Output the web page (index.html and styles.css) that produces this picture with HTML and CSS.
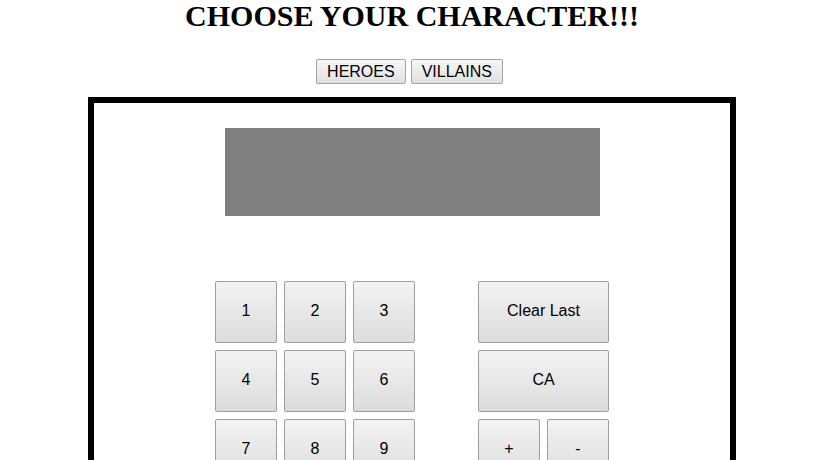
FILE: index.html
```html
<!DOCTYPE html>
<html>
<head>
<meta charset="utf-8">
<link rel="stylesheet" href="styles.css">
</head>
<body>
<div class="page">
  <h1 class="title">CHOOSE YOUR CHARACTER!!!</h1>
  <div class="tabs">
    <button class="tab">HEROES</button>
    <button class="tab">VILLAINS</button>
  </div>
  <div class="calc">
    <div class="display"></div>
    <div class="pad">
      <div class="nums">
        <button class="key">1</button>
        <button class="key">2</button>
        <button class="key">3</button>
        <button class="key">4</button>
        <button class="key">5</button>
        <button class="key">6</button>
        <button class="key">7</button>
        <button class="key">8</button>
        <button class="key">9</button>
      </div>
      <div class="ops">
        <button class="key wide">Clear Last</button>
        <button class="key wide">CA</button>
        <button class="key">+</button>
        <button class="key">-</button>
      </div>
    </div>
  </div>
</div>
</body>
</html>
```

FILE: styles.css
```css
html, body {
  margin: 0;
  padding: 0;
  background: #fff;
}
.page {
  width: 824px;
  height: 460px;
  overflow: hidden;
}
.title {
  margin: 0;
  padding: 0 0 2px;
  text-align: center;
  font-family: "Liberation Serif", serif;
  font-weight: bold;
  font-size: 30px;
  line-height: 31px;
  color: #000;
}
.tabs {
  display: flex;
  justify-content: center;
  gap: 5px;
  padding-right: 5px;
  margin-top: 26px;
}
.tab {
  font-family: "Liberation Sans", Arial, sans-serif;
  font-size: 16px;
  line-height: 18px;
  height: 25px;
  padding: 2px 10px;
  border: 1px solid #a3a3a3;
  border-radius: 2px;
  background: linear-gradient(#f7f7f7, #e0e0e0);
  color: #000;
  margin: 0;
}
.calc {
  width: 636px;
  height: 400px;
  margin: 13px auto 0;
  border: 6px solid #000;
  display: flex;
  flex-direction: column;
  align-items: center;
}
.display {
  width: 375px;
  height: 88px;
  margin-top: 25px;
  background: #808080;
}
.pad {
  display: flex;
  gap: 63px;
  margin-top: 65px;
}
.nums {
  display: grid;
  grid-template-columns: repeat(3, 62px);
  grid-auto-rows: 62px;
  gap: 7px;
}
.ops {
  display: grid;
  grid-template-columns: repeat(2, 62px);
  grid-auto-rows: 62px;
  gap: 7px;
}
.wide {
  grid-column: span 2;
}
.key {
  margin: 0;
  padding: 0 0 2px;
  font-family: "Liberation Sans", Arial, sans-serif;
  font-size: 16px;
  color: #000;
  border: 1px solid #9e9e9e;
  border-radius: 2px;
  background: linear-gradient(#f3f3f3, #dcdcdc);
}
```
